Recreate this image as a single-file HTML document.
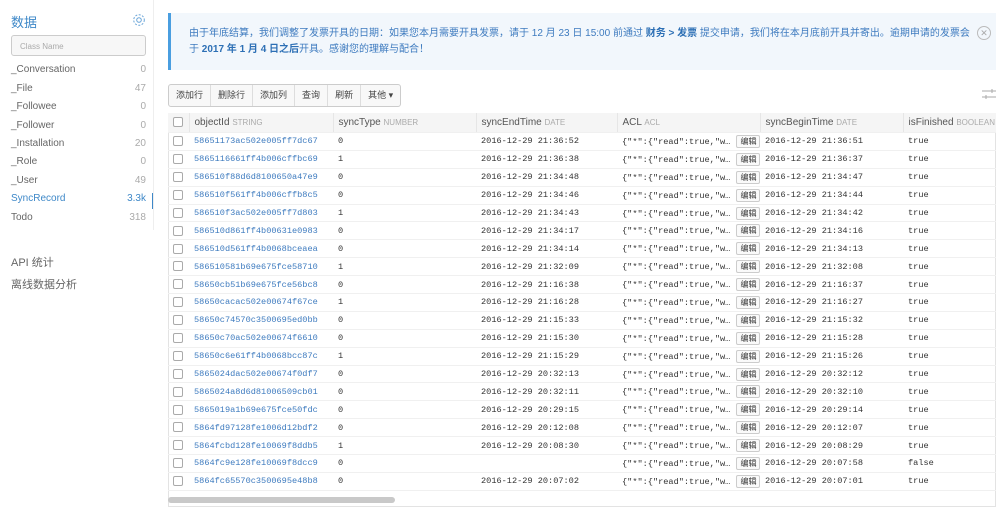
<!DOCTYPE html><html><head><meta charset="utf-8"><style>
body{margin:0;width:1000px;height:511px;overflow:hidden;background:#fff;font-family:"Liberation Sans","Noto Sans CJK SC",sans-serif;color:#555;position:relative}
.sb{position:absolute;left:0;top:0;width:153px;height:511px}
.t{position:absolute;left:11px;top:12px;font-size:13px;color:#3e88c8}
.gear{position:absolute;left:132px;top:13px}
.inp{position:absolute;left:11px;top:35px;width:135px;height:21px;border:1px solid #ccc;border-radius:3px;background:#f7f7f7;font-size:8px;color:#aaa;line-height:21px;padding-left:8px;box-sizing:border-box}
.it{position:absolute;left:11px;width:135px;font-size:10px;color:#666}
.it span{position:absolute;right:0;color:#aaa}
.sel{color:#3e88c8}.sel span{color:#3e88c8}
.vl{position:absolute;left:152px;top:193px;width:1px;height:16px;background:#3e88c8}
.sep{position:absolute;left:153px;top:0;width:1px;height:230px;background:#eee}
.notice{position:absolute;left:168px;top:13px;width:828px;height:57px;background:#f2f7fc;border-left:3px solid #4a9ee0;box-sizing:border-box;font-size:10px;color:#3e7bbf;padding:13px 0 0 18px;line-height:16px}
.notice b{color:#2c6fb5}
.x{position:absolute;right:5px;top:13px;width:12px;height:12px;border:1px solid #bbb;border-radius:50%;color:#aaa;font-size:9px;line-height:12px;text-align:center}
.tb{position:absolute;left:168px;top:84px;height:21px;display:flex;border:1px solid #ccc;border-radius:3px;background:#f8f8f8;font-size:9px;color:#444}
.tb div{padding:0 7px;line-height:21px;border-right:1px solid #ddd}
.tb div:last-child{border:0}
table{position:absolute;left:168px;top:113px;border-collapse:collapse;font-size:9px;table-layout:fixed;width:828px}
td,th{padding:0 0 0 5px;white-space:nowrap;overflow:hidden;border-bottom:1px solid #f0f0f0;text-align:left}
td{height:16.9px;line-height:12px}
th{font-weight:normal;height:19px;line-height:12px;background:#f5f5f5;color:#555;font-size:10px;border-left:1px solid #e6e6e6}
th small{font-size:8px;color:#aaa}
td{font-family:"Liberation Mono",monospace;color:#333;font-size:8.6px}
td.id{color:#3e7bbf}
.cb{display:inline-block;width:8px;height:8px;border:1px solid #aaa;border-radius:2px;background:#fff;vertical-align:middle}
.ed{font-family:"Liberation Sans","Noto Sans CJK SC",sans-serif;font-size:8px;border:1px solid #ccc;border-radius:2px;padding:0 3px;margin-left:1px;background:#fafafa;line-height:11px;display:inline-block}
.acl{font-size:8.6px}
.wrap{position:absolute;left:168px;top:113px;width:828px;height:394px;border:1px solid #e3e3e3;box-sizing:border-box}
.scr{position:absolute;left:168px;top:497px;width:227px;height:6px;background:#c9c9c9;border-radius:3px}
</style></head><body>
<div class="sb">
<div class="t">数据</div>
<svg class="gear" width="14" height="14" viewBox="0 0 14 14"><circle cx="7" cy="7" r="2.3" fill="none" stroke="#6aa5d8"/><circle cx="7" cy="7" r="5.3" fill="none" stroke="#6aa5d8" stroke-dasharray="2 1.5"/></svg>
<div class="inp">Class Name</div>
<div class="it" style="top:64px">_Conversation<span>0</span></div>
<div class="it" style="top:83px">_File<span>47</span></div>
<div class="it" style="top:101px">_Followee<span>0</span></div>
<div class="it" style="top:120px">_Follower<span>0</span></div>
<div class="it" style="top:138px">_Installation<span>20</span></div>
<div class="it" style="top:156px">_Role<span>0</span></div>
<div class="it" style="top:175px">_User<span>49</span></div>
<div class="it sel" style="top:193px">SyncRecord<span>3.3k</span></div>
<div class="it" style="top:212px">Todo<span>318</span></div>
<div class="it" style="top:254px;font-size:11px">API 统计</div>
<div class="it" style="top:276px;font-size:11px">离线数据分析</div>
</div>
<div class="sep"></div><div class="vl"></div>
<div class="notice">由于年底结算，我们调整了发票开具的日期：如果您本月需要开具发票，请于 12 月 23 日 15:00 前通过 <b>财务 &gt; 发票</b> 提交申请，我们将在本月底前开具并寄出。逾期申请的发票会<br>于 <b>2017 年 1 月 4 日之后</b>开具。感谢您的理解与配合！<div class="x">✕</div></div>
<div class="tb"><div>添加行</div><div>删除行</div><div>添加列</div><div>查询</div><div>刷新</div><div>其他 ▾</div></div>
<svg style="position:absolute;left:982px;top:88px" width="14" height="12"><path d="M0 3h14M0 9h14" stroke="#aaa"/><path d="M10 1v4M4 7v4" stroke="#aaa"/></svg>
<div class="wrap"></div>
<table>
<colgroup><col style="width:21px"><col style="width:144px"><col style="width:143px"><col style="width:141px"><col style="width:143px"><col style="width:143px"><col style="width:93px"></colgroup>
<tr><th style="border-left:0"><span class="cb"></span></th><th>objectId <small>STRING</small></th><th>syncType <small>NUMBER</small></th><th>syncEndTime <small>DATE</small></th><th>ACL <small>ACL</small></th><th>syncBeginTime <small>DATE</small></th><th>isFinished <small>BOOLEAN</small></th></tr>
<tbody id="b"></tbody>
</table>
<div class="scr"></div>
<script>
var d=[["58651173ac502e005ff7dc67",0,"21:36:52","21:36:51","true"],["5865116661ff4b006cffbc69",1,"21:36:38","21:36:37","true"],["586510f88d6d8100650a47e9",0,"21:34:48","21:34:47","true"],["586510f561ff4b006cffb8c5",0,"21:34:46","21:34:44","true"],["586510f3ac502e005ff7d803",1,"21:34:43","21:34:42","true"],["586510d861ff4b00631e0983",0,"21:34:17","21:34:16","true"],["586510d561ff4b0068bceaea",0,"21:34:14","21:34:13","true"],["586510581b69e675fce58710",1,"21:32:09","21:32:08","true"],["58650cb51b69e675fce56bc8",0,"21:16:38","21:16:37","true"],["58650cacac502e00674f67ce",1,"21:16:28","21:16:27","true"],["58650c74570c3500695ed0bb",0,"21:15:33","21:15:32","true"],["58650c70ac502e00674f6610",0,"21:15:30","21:15:28","true"],["58650c6e61ff4b0068bcc87c",1,"21:15:29","21:15:26","true"],["5865024dac502e00674f0df7",0,"20:32:13","20:32:12","true"],["5865024a8d6d81006509cb01",0,"20:32:11","20:32:10","true"],["5865019a1b69e675fce50fdc",0,"20:29:15","20:29:14","true"],["5864fd97128fe1006d12bdf2",0,"20:12:08","20:12:07","true"],["5864fcbd128fe10069f8ddb5",1,"20:08:30","20:08:29","true"],["5864fc9e128fe10069f8dcc9",0,"","20:07:58","false"],["5864fc65570c3500695e48b8",0,"20:07:02","20:07:01","true"]];
var h="";d.forEach(function(r){h+='<tr><td><span class="cb"></span></td><td class="id">'+r[0]+'</td><td>'+r[1]+'</td><td>'+(r[2]?'2016-12-29 '+r[2]:'')+'</td><td class="acl">{"*":{"read":true,"w… <span class="ed">编辑</span></td><td>2016-12-29 '+r[3]+'</td><td>'+r[4]+'</td></tr>'});
document.getElementById("b").innerHTML=h;
</script>
</body></html>
